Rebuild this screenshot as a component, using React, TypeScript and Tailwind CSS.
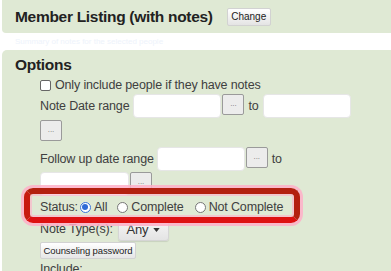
import React from 'react';

const FONT = { fontFamily: '"Liberation Sans", Arial, sans-serif' };

const DotsButton: React.FC<{ className?: string }> = ({ className }) => (
  <button
    type="button"
    className={`flex h-[21px] w-[22px] shrink-0 items-end justify-center rounded-[2px] border border-[#9a9a9a] bg-[#ececec] pb-[6px] text-[8px] leading-none tracking-normal text-[#777] ${className ?? ''}`}
  >
    ...
  </button>
);

const TextBox: React.FC<{ className?: string }> = ({ className }) => (
  <div className={`h-[24px] shrink-0 rounded-[4px] border border-[#e6e6e6] bg-white ${className ?? ''}`} />
);

const Radio: React.FC<{ checked?: boolean }> = ({ checked }) => (
  <span
    className={`flex h-[11px] w-[11px] shrink-0 items-center justify-center rounded-full border bg-white ${
      checked ? 'border-[#3a74d9]' : 'border-[#777]'
    }`}
  >
    {checked && <span className="h-[6px] w-[6px] rounded-full bg-[#2f6bd6]" />}
  </span>
);

export default function App() {
  return (
    <div className="relative h-[271px] w-[391px] overflow-hidden bg-white text-[#404040]" style={FONT}>
      {/* header panel */}
      <div className="ml-[2px] flex h-[33px] items-center rounded-bl-[4px] bg-[#dfe9d4] pl-[13px]">
        <h2 className="text-[15.5px] font-bold tracking-[-0.3px] text-[#222]">Member Listing (with notes)</h2>
        <button
          type="button"
          className="ml-[14px] h-[18px] w-[44px] rounded-[2px] border border-[#d2d2d2] bg-gradient-to-b from-white to-[#e4e4e4] text-[10px] leading-none text-[#222]"
        >
          Change
        </button>
      </div>

      <div className="h-[17px] pl-[15px] pt-[5px] text-[8px] leading-none text-[#eef3fb]">
        Summary of notes for the selected people
      </div>

      {/* options panel */}
      <div className="ml-[2px] h-[240px] rounded-tl-[5px] bg-[#dfe9d4] pl-[13px] pt-[5px]">
        <h3 className="text-[15.5px] font-bold leading-[20px] tracking-[-0.3px] text-[#222]">Options</h3>

        <div className="pl-[25px] text-[12.5px] leading-none tracking-[-0.15px]">
          <label className="mt-[3px] flex h-[14px] items-center gap-[4px]">
            <span className="h-[11px] w-[11px] rounded-[2px] border border-[#666] bg-white" />
            <span>Only include people if they have notes</span>
          </label>

          <div className="mt-[2px] flex h-[24px] items-center">
            <span>Note Date range</span>
            <TextBox className="ml-[4px] w-[88px]" />
            <DotsButton className="ml-[1px] self-start" />
            <span className="ml-[4px]">to</span>
            <TextBox className="ml-[4px] w-[88px]" />
          </div>
          <DotsButton className="mt-[2px]" />

          <div className="mt-[6px] flex h-[24px] items-center">
            <span>Follow up date range</span>
            <TextBox className="ml-[3px] w-[88px]" />
            <DotsButton className="ml-[1px] -translate-y-[2px]" />
            <span className="ml-[4px]">to</span>
          </div>
          <div className="mt-[1px] flex h-[24px] items-start">
            <TextBox className="w-[89px]" />
            <DotsButton className="ml-[1px]" />
          </div>

          <div className="relative mt-[2px] flex h-[18px] items-center">
            <span>Status:</span>
            <span className="ml-[2px] flex items-center gap-[3px]">
              <Radio checked />
              All
            </span>
            <span className="ml-[10px] flex items-center gap-[3px]">
              <Radio />
              Complete
            </span>
            <span className="ml-[11px] flex items-center gap-[3px]">
              <Radio />
              Not Complete
            </span>
            <div className="pointer-events-none absolute left-[-16px] top-[-10px] h-[35px] w-[276px] rounded-[9px] border-[6px] border-t-[#b3200f] border-r-[#b3200f] border-b-[#dd1111] border-l-[#c81a10] shadow-[0_0_0_3px_rgba(255,175,200,0.85),inset_0_0_0_2px_rgba(255,175,200,0.6)]" />
          </div>

          <div className="mt-[2px] flex h-[23px] items-center">
            <span>Note Type(s):</span>
            <button
              type="button"
              className="ml-[5px] flex h-[23px] w-[51px] items-center justify-center gap-[5px] rounded-[3px] border border-[#d5d5d5] bg-gradient-to-b from-[#f7f7f7] to-[#e4e4e4] text-[13px] text-[#333] shadow-[0_1px_1px_rgba(0,0,0,0.1)]"
            >
              Any
              <svg viewBox="0 0 8 5" className="h-[4px] w-[7px]" fill="currentColor" aria-hidden="true">
                <path d="M0 0h8L4 5z" />
              </svg>
            </button>
          </div>

          <button
            type="button"
            className="mt-[1px] h-[17px] w-[96px] rounded-[2px] border border-[#d2d2d2] bg-gradient-to-b from-white to-[#e6e6e6] text-[9.5px] leading-none tracking-[-0.1px] text-[#222]"
          >
            Counseling password
          </button>

          <div className="mt-[4px]">Include:</div>
        </div>
      </div>
    </div>
  );
}
